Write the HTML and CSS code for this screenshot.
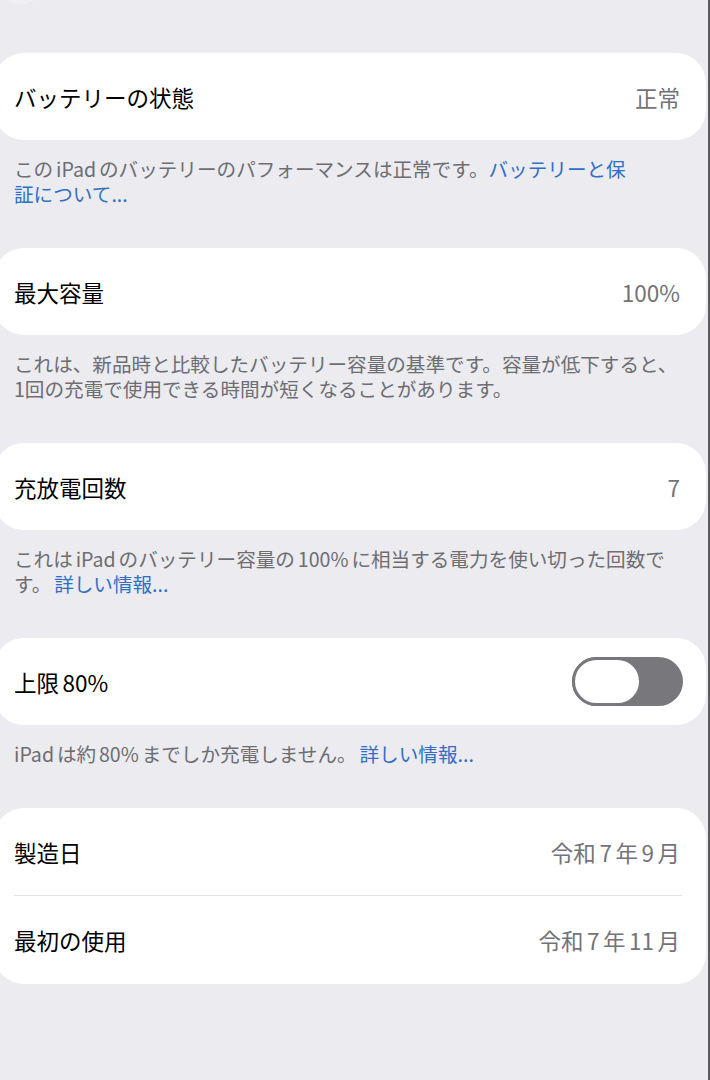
FILE: index.html
```html
<!DOCTYPE html>
<html lang="ja">
<head>
  <meta charset="UTF-8">
  <meta name="viewport" content="width=device-width, initial-scale=1.0">
  <title>バッテリーの状態</title>
  <link rel="stylesheet" href="styles.css">
</head>
<body>
  <div class="page">
    <div class="back-btn"></div>

    <section class="group">
      <div class="card">
        <div class="row">
          <span class="label">バッテリーの状態</span>
          <span class="value">正常</span>
        </div>
      </div>
      <p class="note">
        <span class="line">この iPad のバッテリーのパフォーマンスは正常です。<a href="#">バッテリーと保</a></span>
        <span class="line"><a href="#">証について...</a></span>
      </p>
    </section>

    <section class="group">
      <div class="card">
        <div class="row">
          <span class="label">最大容量</span>
          <span class="value">100%</span>
        </div>
      </div>
      <p class="note">
        <span class="line">これは、新品時と比較したバッテリー容量の基準です。容量が低下すると、</span>
        <span class="line">1回の充電で使用できる時間が短くなることがあります。</span>
      </p>
    </section>

    <section class="group">
      <div class="card">
        <div class="row">
          <span class="label">充放電回数</span>
          <span class="value">7</span>
        </div>
      </div>
      <p class="note">
        <span class="line">これは iPad のバッテリー容量の 100% に相当する電力を使い切った回数で</span>
        <span class="line">す。 <a href="#">詳しい情報...</a></span>
      </p>
    </section>

    <section class="group">
      <div class="card">
        <div class="row">
          <span class="label">上限 80%</span>
          <span class="switch"><span class="knob"></span></span>
        </div>
      </div>
      <p class="note">
        <span class="line">iPad は約 80% までしか充電しません。 <a href="#">詳しい情報...</a></span>
      </p>
    </section>

    <section class="group">
      <div class="card">
        <div class="row">
          <span class="label">製造日</span>
          <span class="value">令和 7 年 9 月</span>
        </div>
        <div class="divider"></div>
        <div class="row">
          <span class="label">最初の使用</span>
          <span class="value">令和 7 年 11 月</span>
        </div>
      </div>
    </section>
  </div>
</body>
</html>
```

FILE: styles.css
```css
body {
  font-family: "Noto Sans CJK JP", "Noto Sans", sans-serif;
  background-color: #ebebf0;
  margin: 0;
}
.page {
  position: relative;
  min-height: 100vh;
  padding-top: 53px;
  border-right: 2px solid #5c5c60;
  box-sizing: border-box;
  overflow: hidden;
}
.back-btn {
  position: absolute;
  top: -46px;
  left: -4px;
  width: 50px;
  height: 50px;
  border-radius: 50%;
  background-color: #f1f1f5;
}
.group {
  margin-bottom: 42px;
}
.card {
  background-color: #fff;
  border-radius: 30px;
  margin: 0 2px 0 -6px;
}
.row {
  display: flex;
  align-items: center;
  justify-content: space-between;
  height: 87px;
  padding: 0 26px 0 20px;
}
.card .row + .divider + .row {
  height: 88px;
}
.divider {
  height: 1px;
  background-color: #e2e2e6;
  margin: 0 24px 0 20px;
}
.label {
  font-size: 22.5px;
  font-weight: 400;
  word-spacing: -1.5px;
  color: #000;
}
.value {
  font-size: 22.5px;
  word-spacing: -1.5px;
  color: #737378;
}
.note {
  margin: 0;
  padding: 16px 6px 0 14px;
  font-size: 19.6px;
  line-height: 25px;
  word-spacing: -1.5px;
  color: #6d6d72;
}
.note .line {
  display: block;
  height: 25px;
  white-space: nowrap;
}
.note a {
  color: #2f6fc4;
  text-decoration: none;
}
.switch {
  display: flex;
  width: 111px;
  height: 49px;
  margin-right: -3px;
  border-radius: 25px;
  background-color: #77777c;
}
.knob {
  width: 70px;
  height: 49px;
  box-sizing: border-box;
  border-radius: 25px;
  border: 3px solid #77777c;
  background-color: #fff;
}
```
